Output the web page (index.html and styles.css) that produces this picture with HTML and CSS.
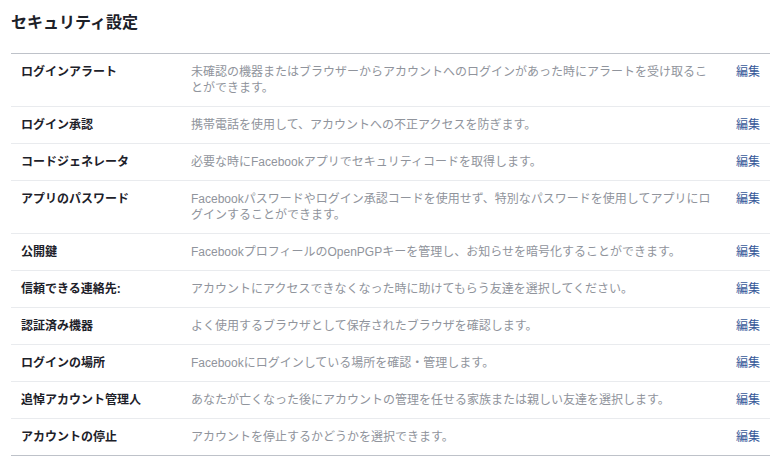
FILE: index.html
```html
<!DOCTYPE html>
<html lang="ja">
<head>
<meta charset="utf-8">
<link rel="stylesheet" href="styles.css">
</head>
<body>
<div class="page">
  <h2 class="title">セキュリティ設定</h2>
  <ul class="list">
    <li class="row"><span class="label">ログインアラート</span><span class="desc">未確認の機器またはブラウザーからアカウントへのログインがあった時にアラートを受け取ることができます。</span><a class="edit">編集</a></li>
    <li class="row"><span class="label">ログイン承認</span><span class="desc">携帯電話を使用して、アカウントへの不正アクセスを防ぎます。</span><a class="edit">編集</a></li>
    <li class="row"><span class="label">コードジェネレータ</span><span class="desc">必要な時にFacebookアプリでセキュリティコードを取得します。</span><a class="edit">編集</a></li>
    <li class="row"><span class="label">アプリのパスワード</span><span class="desc">Facebookパスワードやログイン承認コードを使用せず、特別なパスワードを使用してアプリにログインすることができます。</span><a class="edit">編集</a></li>
    <li class="row"><span class="label">公開鍵</span><span class="desc">FacebookプロフィールのOpenPGPキーを管理し、お知らせを暗号化することができます。</span><a class="edit">編集</a></li>
    <li class="row"><span class="label">信頼できる連絡先:</span><span class="desc">アカウントにアクセスできなくなった時に助けてもらう友達を選択してください。</span><a class="edit">編集</a></li>
    <li class="row"><span class="label">認証済み機器</span><span class="desc">よく使用するブラウザとして保存されたブラウザを確認します。</span><a class="edit">編集</a></li>
    <li class="row"><span class="label">ログインの場所</span><span class="desc">Facebookにログインしている場所を確認・管理します。</span><a class="edit">編集</a></li>
    <li class="row"><span class="label">追悼アカウント管理人</span><span class="desc">あなたが亡くなった後にアカウントの管理を任せる家族または親しい友達を選択します。</span><a class="edit">編集</a></li>
    <li class="row"><span class="label">アカウントの停止</span><span class="desc">アカウントを停止するかどうかを選択できます。</span><a class="edit">編集</a></li>
  </ul>
</div>
</body>
</html>
```
FILE: styles.css
```css
html, body {
  margin: 0;
  padding: 0;
  background: #ffffff;
}
body {
  font-family: "Liberation Sans", "Noto Sans CJK JP", sans-serif;
  font-size: 12px;
  color: #1d2129;
}
.page {
  padding: 13px 10px 0 11px;
}
.title {
  margin: 0 0 20px 0;
  font-size: 16px;
  line-height: 20px;
  font-weight: bold;
  color: #1d2129;
}
.list {
  list-style: none;
  margin: 0;
  padding: 0;
  border-top: 1px solid #bec2c9;
  border-bottom: 1px solid #bec2c9;
}
.row {
  display: grid;
  grid-template-columns: 170px 520px 1fr;
  padding: 10px 10px 10px 10px;
  line-height: 16px;
  border-top: 1px solid #e9ebee;
}
.row:first-child {
  border-top: none;
}
.label {
  font-weight: bold;
  color: #1d2129;
}
.desc {
  color: #90949c;
}
.edit {
  color: #365899;
  text-align: right;
  padding-right: 0;
}
```
